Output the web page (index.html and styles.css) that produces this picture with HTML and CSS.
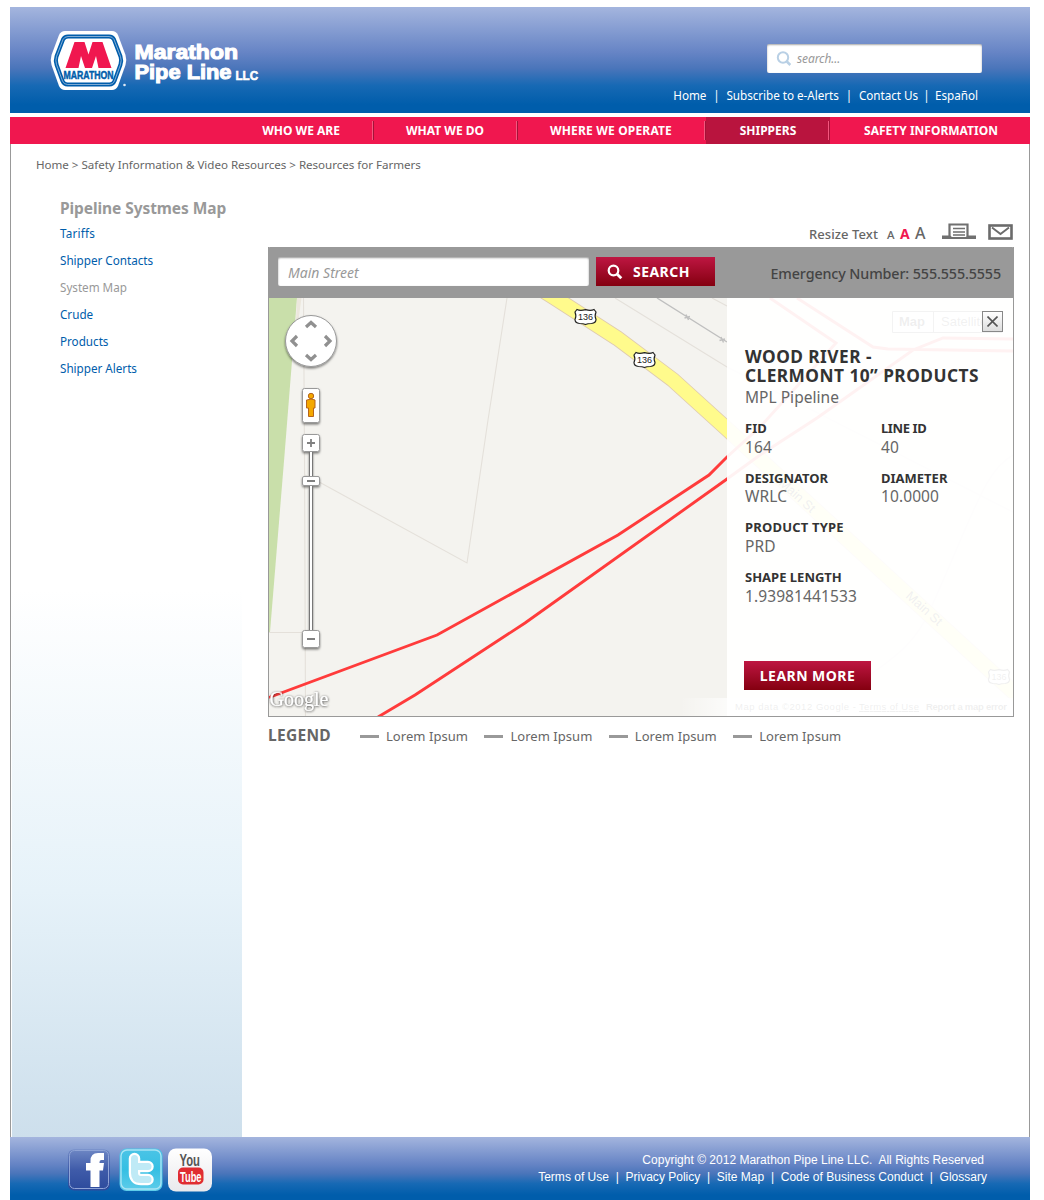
FILE: index.html
```html
<!DOCTYPE html>
<html lang="en">
<head>
<meta charset="utf-8">
<title>Marathon Pipe Line LLC</title>
<link rel="stylesheet" href="styles.css">
</head>
<body>
<div class="page">
  <header class="header">
    <svg class="logo" width="212" height="64" viewBox="48 29 212 64">
      <path d="M65 31H112Q116 31 118 35L125.500 55Q127 60 125.500 65L118 86Q116 90 112 90H65Q61 90 59 86L51.500 65Q50 60 51.500 55L59 35Q61 31 65 31Z" fill="#fff"/>
      <path id="ring" d="M68 36.500H109Q112.500 36.500 114 39.500L120.500 56.500Q121.800 60.500 120.500 64.500L114.500 81Q113 84.500 109.500 84.500H67.500Q64 84.500 62.500 81L56.500 64.500Q55.200 60.500 56.500 56.500L63 39.500Q64.500 36.500 68 36.500Z" fill="#fff" stroke="#005dab" stroke-width="4"/>
      <use href="#ring" class="ring-line"/>
      <path d="M68 36.500H109Q112.500 36.500 114 39.500L120.500 56.500Q121.800 60.500 120.500 64.500L114.500 81Q113 84.500 109.500 84.500H67.500Q64 84.500 62.500 81L56.500 64.500Q55.200 60.500 56.500 56.500L63 39.500Q64.500 36.500 68 36.500Z" fill="none" stroke="#b9cfe6" stroke-width=".7"/>
      <path d="M65.500 68L74.500 42H84.500L88.500 54.500L92.500 42H102.500L111.500 68H98.500L96 56L92 68H85L81 56L78.500 68Z" fill="#f0174f"/>
      <text x="63.500" y="78.600" textLength="50" lengthAdjust="spacingAndGlyphs" class="logo-badge">MARATHON</text>
      <circle cx="124.500" cy="85" r="1.300" fill="#dfe9f5"/>
      <text x="134.500" y="58.500" textLength="103.500" lengthAdjust="spacingAndGlyphs" class="logo-name">Marathon</text>
      <text x="134.500" y="79" textLength="97" lengthAdjust="spacingAndGlyphs" class="logo-name">Pipe Line</text>
      <text x="235.500" y="79.500" textLength="22.500" lengthAdjust="spacingAndGlyphs" class="logo-llc">LLC</text>
    </svg>
    <div class="header-tools">
      <div class="site-search">
        <svg width="16" height="16" viewBox="0 0 16 16" fill="none" stroke="#b9d0e5" stroke-width="2"><circle cx="7" cy="6.500" r="5.200"/><path d="M10.800 10.500L14.300 14" stroke-width="2.500"/></svg>
        <em>search...</em>
      </div>
      <nav class="top-links">
        <a>Home</a><i>|</i><a>Subscribe to e-Alerts</a><i>|</i><a>Contact Us</a><i class="tight">|</i><a>Español</a>
      </nav>
    </div>
  </header>
  <nav class="main-nav">
    <a class="nav-a">WHO WE ARE</a>
    <a class="nav-b">WHAT WE DO</a>
    <a class="nav-c">WHERE WE OPERATE</a>
    <a class="nav-d">SHIPPERS</a>
    <a class="nav-e">SAFETY INFORMATION</a>
  </nav>
  <div class="body">
    <div class="crumbs">Home &gt; Safety Information &amp; Video Resources &gt; Resources for Farmers</div>
    <div class="columns">
      <aside class="sidebar">
        <h2>Pipeline Systmes Map</h2>
        <ul>
          <li class="wide-text">Tariffs</li>
          <li>Shipper Contacts</li>
          <li class="current">System Map</li>
          <li>Crude</li>
          <li>Products</li>
          <li>Shipper Alerts</li>
        </ul>
      </aside>
      <main class="content">
        <div class="page-tools">
          <span class="resize">Resize Text</span>
          <span class="size-s">A</span><span class="size-m">A</span><span class="size-l">A</span>
          <svg class="print" width="34" height="18" viewBox="942 222 34 18"><path d="M949.500 237V224.500H967.500V237" fill="#fff" stroke="#707070" stroke-width="2.200"/><path d="M953 228.500H965M953 232H965M953 235H965" stroke="#707070" stroke-width="1.700"/><path d="M942 235.500H950L952 237H966L968 235.500H976V239H942Z" fill="#707070"/></svg>
          <svg class="mail" width="25" height="16" viewBox="0 0 25 16" fill="none" stroke="#6b6b6b"><rect x="1.500" y="1.500" width="22" height="13" stroke-width="2.600"/><path d="M4 3.500L12.500 10L21 3.500" stroke-width="1.900"/></svg>
        </div>
        <section class="map-box">
          <div class="map-bar">
            <div class="map-input"><em>Main Street</em></div>
            <button class="btn search-btn"><svg width="16" height="16" viewBox="0 0 16 16" fill="none" stroke="#fff" stroke-width="2.200"><circle cx="6.500" cy="6.500" r="4.800"/><path d="M10.200 10.200L14.300 14.300" stroke-width="2.800"/></svg>SEARCH</button>
            <div class="emergency">Emergency Number: 555.555.5555</div>
          </div>
          <div class="map">
            <svg class="map-art" width="744" height="418" viewBox="269 298 744 418">
              <defs>
                <g id="shield"><path d="M-8.500 -7.500Q-5.500 -5.800 0 -7.300Q5.500 -5.800 8.500 -7.500L10.500 -5Q8.800 -1 10.500 2.500Q10.500 6 6 6.500Q2 6.500 0 7.500Q-2 6.500 -6 6.500Q-10.500 6 -10.500 2.500Q-8.800 -1 -10.500 -5Z" fill="#fff" stroke="#222" stroke-width="1.200"/><text x="-7.500" y="3.300" textLength="15" class="shield-no">136</text></g>
                <linearGradient id="fade"><stop offset="0" stop-color="#fff" stop-opacity="0"/><stop offset="1" stop-color="#fff" stop-opacity=".7"/></linearGradient>
                <filter id="drop" x="-30%" y="-30%" width="160%" height="170%"><feDropShadow dx="0" dy="1.500" stdDeviation="1.200" flood-opacity=".5"/></filter>
                <filter id="soft" x="-10%" y="-20%" width="120%" height="150%"><feDropShadow dx=".3" dy=".5" stdDeviation=".8" flood-color="#222" flood-opacity="1"/></filter>
              </defs>
              <path d="M269 298H1013V716H269Z" fill="#f4f3ef"/>
              <path d="M269 298H297L284.500 455L270 632H269Z" fill="#c9dfaa"/>
              <path d="M297 298H301.500L295 345Z" fill="#ece7dd"/>
              <g fill="none" stroke="#e4e0da" stroke-width="1.100">
                <path d="M303.500 298L304.500 455L305.500 716M269 632.500H304M305 475L321 483L467 563L488 420L507 298M615 298L727 367L1013 512M712 298L727 306M1013 455C985 470 975 510 930 610C915 645 890 660 870 675"/>
              </g>
              <path d="M657 298L727 342M686 314.500L688.500 320M684.500 318L690 316.500M721 337L723.500 342.500M719.500 340.500L725 339" fill="none" stroke="#bfbfbf" stroke-width="1.400"/>
              <path d="M539 288L555 298L617 338L673 380L727 429L1020 698" fill="none" stroke="#dfcbb0" stroke-width="15.800"/>
              <path d="M539 288L555 298L617 338L673 380L727 429L1020 698" fill="none" stroke="#fffb8c" stroke-width="14"/>
              <g fill="none" stroke="#ff3b3b" stroke-width="2.900">
                <path d="M269 697.500L437 635L618 535L709 475L727 457L760 427L836 343L770 298M378 717L415 695L525 623L727 479L760 455L817 418L913 350L943 338L1013 339M797 298L873 347L888 349L1013 351"/>
              </g>
              <use href="#shield" x="585.500" y="317"/><use href="#shield" x="644.500" y="360"/><use href="#shield" x="999" y="677"/>
              <text class="street" transform="translate(778 484) rotate(42)">Main St</text>
              <text class="street" transform="translate(905 597) rotate(42)">Main St</text>
              <path d="M892.500 311.500H1002V332.500H892.500ZM933.500 311.500V332.500" fill="#fff" stroke="#555"/>
              <text x="899" y="326" class="type-on">Map</text><text x="941" y="326" class="type-off">Satellite</text>
              <path d="M680 698H727V716H680Z" fill="url(#fade)"/><path d="M727 698H1013V716H727Z" fill="#fff" opacity=".7"/>
              <text x="735" y="710" textLength="121" class="credit">Map data ©2012 Google -</text><text x="859" y="710" textLength="60" class="credit under">Terms of Use</text><text x="926" y="710" textLength="81" class="credit strong">Report a map error</text>
              <text x="269.500" y="705.500" textLength="59" lengthAdjust="spacingAndGlyphs" class="google" filter="url(#soft)">Google</text>
              <g filter="url(#drop)" fill="#fff" stroke="#999">
                <circle cx="311" cy="341" r="25.500"/>
                <rect x="302.500" y="388.500" width="17" height="34" rx="2"/>
                <rect x="309.500" y="440" width="3" height="200" stroke="#777"/>
                <rect x="302.500" y="434.500" width="17" height="17" rx="2"/>
                <rect x="302.500" y="476.500" width="17" height="9" rx="1.500"/>
                <rect x="302.500" y="630.500" width="17" height="17" rx="2"/>
              </g>
              <path d="M306 327L311 322.500L316 327M306 355L311 359.500L316 355M297 336L292 341L297 346M325 336L330 341L325 346" fill="none" stroke="#909090" stroke-width="3.200"/>
              <path d="M307 443H315M311 439V447M307 481H315M307 639H315" stroke="#808080" stroke-width="1.800"/>
              <path d="M307 400Q311 398 315 400V408H313.500V416.500H308.500V408H306.500V400Z" fill="#f4a800" stroke="#b5651d" stroke-width="1"/><circle cx="311" cy="396" r="2.700" fill="#f4a800" stroke="#b5651d"/>
            </svg>
            <div class="panel">
              <button class="close"><svg width="11" height="11" viewBox="0 0 11 11" stroke="#555" stroke-width="1.600"><path d="M.5.500L10.500 10.500M10.500.500L.5 10.500"/></svg></button>
              <h1>WOOD RIVER -<br>CLERMONT 10” PRODUCTS</h1>
              <p class="owner">MPL Pipeline</p>
              <dl class="facts">
                <div><dt>FID</dt><dd>164</dd></div>
                <div><dt class="narrow">LINE ID</dt><dd>40</dd></div>
                <div><dt>DESIGNATOR</dt><dd>WRLC</dd></div>
                <div><dt>DIAMETER</dt><dd>10.0000</dd></div>
                <div class="wide"><dt class="loose">PRODUCT TYPE</dt><dd>PRD</dd></div>
                <div class="wide"><dt>SHAPE LENGTH</dt><dd>1.93981441533</dd></div>
              </dl>
              <button class="btn learn">LEARN MORE</button>
            </div>
          </div>
        </section>
        <div class="legend">
          <strong>LEGEND</strong>
          <span class="key">Lorem Ipsum</span><span class="key">Lorem Ipsum</span><span class="key">Lorem Ipsum</span><span class="key">Lorem Ipsum</span>
        </div>
      </main>
    </div>
  </div>
  <footer class="footer">
    <div class="social">
      <svg width="44" height="44" viewBox="67 1148 44 44"><defs><linearGradient id="fb" x2="0" y2="1"><stop offset="0" stop-color="#6e87c4"/><stop offset=".5" stop-color="#3f5ba9"/><stop offset="1" stop-color="#2c4a9c"/></linearGradient></defs><rect x="68" y="1149.500" width="42" height="41" rx="6" fill="url(#fb)"/><rect x="69.500" y="1150.500" width="39" height="38" rx="5" fill="none" stroke="#8fa4d6"/><path d="M90.500 1187V1170.500H86V1163H90.500V1161Q90.500 1153 98 1153H104V1160H101.500Q99.500 1160 99.500 1162V1163H104L103 1170.500H99.500V1187Z" fill="#fff"/></svg>
      <svg width="44" height="44" viewBox="119 1148 44 44"><defs><linearGradient id="tw" x2="0" y2="1"><stop offset="0" stop-color="#4cc4e6"/><stop offset=".5" stop-color="#35bfe3"/><stop offset="1" stop-color="#5fcdea"/></linearGradient></defs><rect x="119.500" y="1148.500" width="43" height="42.500" rx="7" fill="url(#tw)"/><rect x="121" y="1150" width="40" height="39" rx="6" fill="none" stroke="#a9e4f4" stroke-width="1.400"/><path d="M134.500 1158.500V1173Q134.500 1179.500 141 1179.500H148M135 1166.500H148" fill="none" stroke="#fff" stroke-width="11.500" stroke-linecap="round"/><path d="M134.500 1158.500V1173Q134.500 1179.500 141 1179.500H148M135 1166.500H148" fill="none" stroke="#bfeaf6" stroke-width="7" stroke-linecap="round"/></svg>
      <svg width="44" height="44" viewBox="168 1148 44 44"><defs><linearGradient id="yt" x2="0" y2="1"><stop offset="0" stop-color="#fff"/><stop offset="1" stop-color="#e9e9ec"/></linearGradient></defs><rect x="168" y="1148.500" width="44" height="43" rx="8" fill="url(#yt)"/><rect x="178" y="1167.500" width="25.500" height="17" rx="5" fill="#e02c31"/><text x="179.500" y="1165.500" textLength="20.500" lengthAdjust="spacingAndGlyphs" class="yt-you">You</text><text x="180" y="1181.500" textLength="21.500" lengthAdjust="spacingAndGlyphs" class="yt-tube">Tube</text></svg>
    </div>
    <div class="legal">
      <p class="copy">Copyright © 2012 Marathon Pipe Line LLC.&nbsp; All Rights Reserved</p>
      <p>Terms of Use&nbsp; |&nbsp; Privacy Policy&nbsp; |&nbsp; Site Map&nbsp; |&nbsp; Code of Business Conduct&nbsp; |&nbsp; Glossary</p>
    </div>
  </footer>
</div>
</body>
</html>
```
FILE: styles.css
```css
* { box-sizing: border-box; }
body { margin: 0; background: #fff; font-family: "Noto Sans", "Open Sans", sans-serif; color: #666; }
h1, h2, p, ul, dl, dd { margin: 0; padding: 0; }
ul { list-style: none; }
button { border: 0; padding: 0; font: inherit; }

.page { width: 1020px; height: 1193px; margin: 7px 0 0 10px; display: flex; flex-direction: column; }

.header { height: 106px; flex: none; display: flex; justify-content: space-between; padding: 22px 48px 0 38px; background: linear-gradient(#a4b5de, #6684c5 43%, #4a75ba 58%, #1769b4 74%, #005dab 92%); }
.logo { display: block; }
.ring-line { display: none; }
.logo-badge { font: bold 11.500px "Liberation Sans", sans-serif; fill: #005dab; stroke: #005dab; stroke-width: .5px; }
.logo-name { font: bold 21px "Liberation Sans", sans-serif; fill: #fff; stroke: #fff; stroke-width: 1.100px; }
.logo-llc { font: bold 12.500px "Liberation Sans", sans-serif; fill: #fff; stroke: #fff; stroke-width: .6px; }
.header-tools { padding-top: 15px; display: flex; flex-direction: column; align-items: flex-end; }
.site-search { width: 215px; height: 29px; display: flex; align-items: center; gap: 5px; padding-left: 9px; background: #fff; border-radius: 2px; box-shadow: inset 0 1px 2px rgba(0,0,0,.35); font-size: 12px; letter-spacing: -.1px; color: #999; }
.top-links { display: flex; margin-top: 13px; padding-right: 4px; font-size: 11.700px; letter-spacing: -.03px; line-height: 18px; color: #fff; }
.top-links i { font-style: normal; width: 20px; text-align: center; }
.top-links .tight { width: 17px; }

.main-nav { height: 27px; flex: none; margin-top: 4px; display: flex; justify-content: flex-end; background: #f0174f; color: #fff; font-weight: bold; font-size: 12px; line-height: 27px; }
.main-nav a { text-align: center; padding-right: 2px; background: linear-gradient(90deg, #f4577e 50%, #a31238 50%) right 4px / 2px 19px no-repeat; }
.nav-a, .nav-b { width: 144px; }
.nav-c { width: 188px; letter-spacing: .17px; }
.main-nav .nav-d { width: 124px; padding: 0; background-color: #b9143e; }
.main-nav .nav-e { width: 200px; padding: 0 0 0 2px; background: none; }

.body { flex: 1; border: solid #999; border-width: 0 1px; display: flex; flex-direction: column; }
.crumbs { height: 40px; padding: 12px 0 0 25px; font-size: 11.600px; letter-spacing: -.03px; line-height: 18px; }
.columns { flex: 1; display: flex; }
.sidebar { width: 231px; margin-right: 26px; padding: 14px 0 0 49px; background: linear-gradient(#fff, #e6f2f9 55%, #cddfec) right bottom / 230px 547px no-repeat; }
.sidebar h2 { font-size: 15.500px; letter-spacing: -.08px; line-height: 20px; color: #999; }
.sidebar li { font-size: 11.700px; letter-spacing: -.02px; line-height: 27px; color: #005dab; }
.sidebar .wide-text { letter-spacing: .2px; }
.sidebar ul { margin-top: 2px; }
.sidebar .current { color: #999; }

.content { width: 746px; padding-top: 38px; }
.page-tools { height: 25px; display: flex; padding-left: 541px; font-size: 13px; line-height: 25px; white-space: nowrap; }
.resize { width: 78px; letter-spacing: .08px; font-weight: 500; }
.size-s { font-size: 11.500px; width: 13px; font-weight: 500; }
.size-m { font-weight: bold; font-size: 14px; line-height: 24px; color: #f0174f; width: 15px; }
.size-l { font-size: 16px; line-height: 23px; font-weight: 500; width: 27px; }
.print, .mail { flex: none; }
.mail { margin: 2px 0 0 12px; }

.map-box { height: 470px; border: 1px solid #999; border-top: 0; }
.map-bar { height: 51px; display: flex; align-items: flex-start; margin: 0 -1px; padding: 10px 13px 0 10px; background: #999; border-radius: 2px 2px 0 0; }
.map-input { width: 311px; height: 29px; background: #fff; border-radius: 2px; box-shadow: inset 0 1px 2px rgba(0,0,0,.4); padding-left: 10px; font-size: 14px; line-height: 31px; color: #999; }
.btn { display: flex; align-items: center; justify-content: center; height: 29px; background: linear-gradient(#be1642, #840010); color: #fff; font-weight: bold; font-size: 14px; letter-spacing: .45px; }
.search-btn { width: 119px; margin-left: 7px; padding-left: 11px; gap: 10px; justify-content: flex-start; }
.emergency { margin-left: auto; font-size: 14.300px; letter-spacing: -.11px; font-weight: 500; line-height: 33px; color: #444; white-space: nowrap; }

.map { position: relative; height: 418px; display: flex; justify-content: flex-end; overflow: hidden; }
.map-art { position: absolute; left: 0; top: 0; }
.shield-no { font: 9px "Liberation Sans", sans-serif; fill: #222; }
.street { font: 13px "Liberation Sans", sans-serif; fill: #222; }
.type-on { font: bold 13px "Liberation Sans", sans-serif; fill: #111; }
.type-off { font: 13px "Liberation Sans", sans-serif; fill: #333; }
.credit { font: 9.500px "Liberation Sans", sans-serif; fill: #111; }
.under { text-decoration: underline; }
.strong { font-weight: bold; }
.google { font: 21px "Liberation Serif", serif; fill: #fff; }

.panel { position: relative; width: 286px; padding: 49px 0 0 18px; background: rgba(255,255,255,.935); }
.close { position: absolute; right: 10px; top: 13px; width: 21px; height: 21px; border: 1px solid #888; background: linear-gradient(#fff, #ddd); display: flex; align-items: center; justify-content: center; }
.panel h1 { font-size: 17.300px; letter-spacing: .46px; line-height: 19px; color: #333; white-space: nowrap; }
.owner { font-size: 15.500px; letter-spacing: .03px; line-height: 20px; margin-top: 2px; }
.facts { display: grid; grid-template-columns: 136px auto; grid-auto-rows: 49.700px; margin-top: 12px; }
.facts .wide { grid-column: 1 / 3; }
.facts dt { font-size: 13px; font-weight: bold; line-height: 18px; color: #333; }
.facts .narrow { letter-spacing: -.4px; }
.facts .loose { letter-spacing: .2px; }
.facts dd { font-size: 15.500px; letter-spacing: .1px; line-height: 20px; margin-top: -.3px; }
.learn { width: 127px; margin: 43px 0 0 -1px; }

.legend { display: flex; height: 38px; align-items: center; font-size: 13px; letter-spacing: .05px; }
.legend strong { width: 92px; font-size: 15.500px; letter-spacing: .3px; margin-top: -2px; }
.key { display: flex; align-items: center; width: 124.400px; gap: 7px; white-space: nowrap; }
.key::before { content: ""; width: 19px; height: 3px; background: #999; }

.footer { height: 63px; flex: none; display: flex; justify-content: space-between; padding: 11px 43px 0 57px; background: linear-gradient(#a4b5de, #6684c5 43%, #4a75ba 58%, #1769b4 74%, #005dab 92%); }
.social { display: flex; }
.social svg:nth-child(2) { margin-left: 8px; }
.social svg:nth-child(3) { margin-left: 5px; }
.yt-you { font: bold 17px "Liberation Sans", sans-serif; fill: #555; }
.yt-tube { font: bold 15px "Liberation Sans", sans-serif; fill: #fff; }
.legal { font: 12px/17px "Liberation Sans", sans-serif; letter-spacing: .01px; color: #fff; text-align: right; padding-top: 4px; }
.copy { padding-right: 3px; }
```
